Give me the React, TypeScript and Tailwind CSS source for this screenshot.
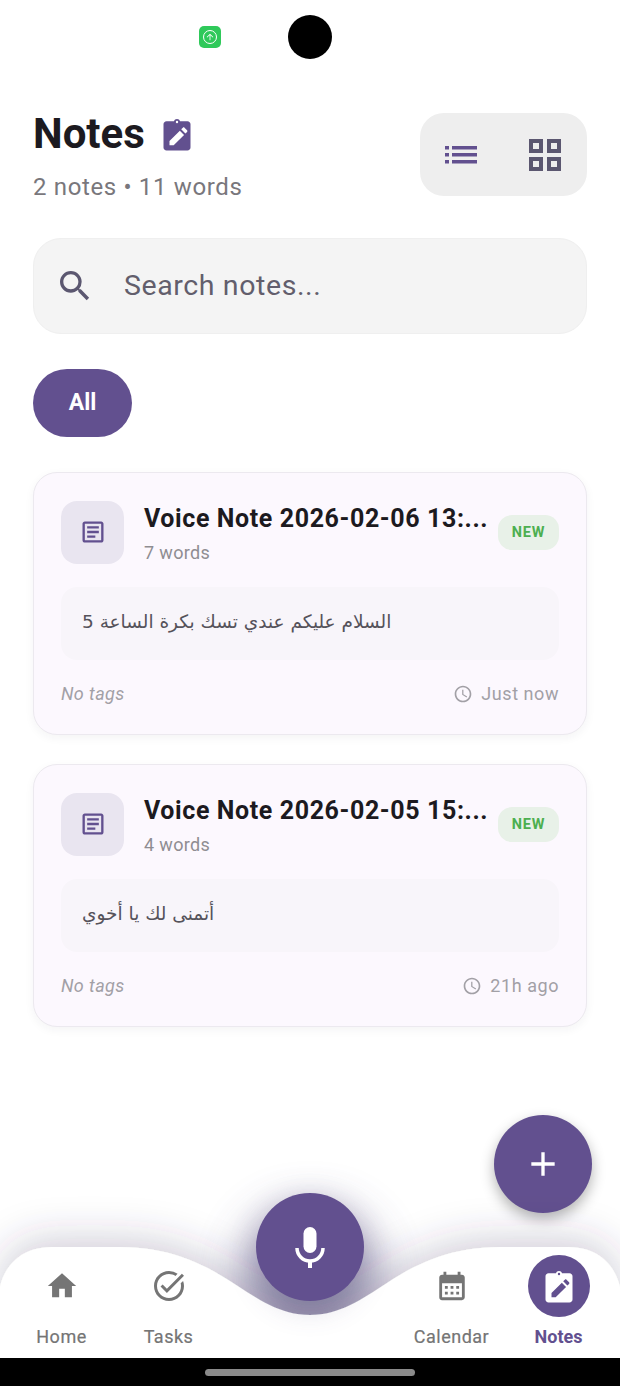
import { MdHome, MdTaskAlt, MdCalendarMonth, MdSearch, MdOutlineArticle, MdAccessTime, MdAdd, MdArrowUpward } from 'react-icons/md';

const notes = [
  { title: 'Voice Note 2026-02-06 13:...', words: '7 words', body: 'السلام عليكم عندي تسك بكرة الساعة 5', time: 'Just now' },
  { title: 'Voice Note 2026-02-05 15:...', words: '4 words', body: 'أتمنى لك يا أخوي', time: '21h ago' },
];

function ClipboardEdit({ className, bg, fg }: { className: string; bg: string; fg: string }) {
  return (
    <svg viewBox="0 0 24 24" className={className}>
      <path fill={bg} d="M5 3.500h5c.3-1 1-1.500 2-1.500s1.700.5 2 1.500h5c1.100 0 2 .9 2 2V21c0 1.100-.9 2-2 2H5c-1.100 0-2-.9-2-2V5.500c0-1.100.9-2 2-2z" />
      <circle cx="12" cy="4" r="0.800" fill={fg} />
      <path fill={fg} d="M7 19.500v-2.800l6.900-6.900 2.800 2.800-6.900 6.900H7zM14.800 8.900l1.100-1.100c.3-.3.800-.3 1.100 0l1.700 1.700c.3.3.3.800 0 1.100l-1.100 1.100-2.800-2.800z" />
    </svg>
  );
}

function NoteCard({ note }: { note: (typeof notes)[number] }) {
  return (
    <div className="h-[263px] rounded-[24px] border border-[#ece9ef] bg-[#fcf8fe] px-[27px] pt-[27px] shadow-[0_3px_10px_rgba(40,30,60,0.05)]">
      <div className="flex h-[64px] items-center">
        <div className="flex h-[63px] w-[63px] shrink-0 items-center justify-center rounded-[16px] bg-[#e9e5f0]">
          <MdOutlineArticle className="h-[28px] w-[28px] text-[#62508f]" />
        </div>
        <div className="ml-[20px] w-[350px] min-w-0 pt-[3px]">
          <div className="whitespace-nowrap text-[25px] font-bold leading-[32px] tracking-[0.6px] text-[#1c1a20]">{note.title}</div>
          <div className="mt-[6px] text-[18px] leading-[24px] tracking-[0.35px] text-[#8f8d92]">{note.words}</div>
        </div>
        <div className="ml-auto flex h-[35px] w-[61px] shrink-0 items-center justify-center rounded-[14px] bg-[#e8f1e8] pt-[2px] text-[14.500px] font-bold tracking-[0.8px] text-[#4caf50]">NEW</div>
      </div>
      <div className="mt-[23px] flex h-[73px] items-center rounded-[16px] bg-[#f8f5fa] px-[21px] pb-[3px]">
        <span dir="rtl" className="text-[18.500px] text-[#55525a] [font-family:'DejaVu_Sans',sans-serif]">{note.body}</span>
      </div>
      <div className="mt-[20px] flex items-center justify-between">
        <span className="text-[18px] italic tracking-[0.4px] text-[#a2a0a6]">No tags</span>
        <span className="flex items-center gap-[8px] text-[18px] tracking-[0.55px] text-[#a2a0a6]">
          <MdAccessTime className="h-[20px] w-[20px]" />
          {note.time}
        </span>
      </div>
    </div>
  );
}

function NavItem({ label, children, active }: { label: string; children: React.ReactNode; active?: boolean }) {
  return (
    <div className="flex w-[107px] flex-col items-center">
      <div className="flex h-[62px] w-[62px] items-center justify-center">{children}</div>
      <span className={active ? 'mt-[8px] text-[18px] font-bold leading-[24px] text-[#62508f]' : 'mt-[8px] text-[18px] font-normal leading-[24px] tracking-[0.5px] text-[#757575] [-webkit-text-stroke:0.2px_#757575]'}>{label}</span>
    </div>
  );
}

export default function App() {
  return (
    <div className="relative flex h-[1386px] w-[620px] flex-col overflow-hidden bg-white [font-family:Roboto,sans-serif]">
      {/* status bar with camera hole */}
      <div className="relative h-[113px] shrink-0">
        <div className="absolute left-[199px] top-[26px] flex h-[22px] w-[22px] items-center justify-center rounded-[5px] bg-[#2fc95a]">
          <div className="flex h-[14px] w-[14px] items-center justify-center rounded-full border border-white">
            <MdArrowUpward className="h-[10px] w-[10px] text-white" />
          </div>
        </div>
        <div className="absolute left-[288px] top-[15px] h-[44px] w-[44px] rounded-full bg-black" />
      </div>

      <div className="flex-1 px-[33px]">
        <div className="flex h-[83px] items-start justify-between">
          <div>
            <div className="flex h-[42px] items-center">
              <span className="text-[42px] font-bold leading-[42px] text-[#1c1a20]">Notes</span>
              <ClipboardEdit className="ml-[14px] h-[36px] w-[36px]" bg="#62508f" fg="#ffffff" />
            </div>
            <div className="mt-[18px] text-[24px] leading-[28px] tracking-[0.65px] text-[#79777c]">2 notes • 11 words</div>
          </div>
          <div className="flex h-[83px] w-[167px] items-center rounded-[24px] bg-[#eeeeee] pl-[25px]">
            <svg viewBox="0 0 32 18" className="h-[18px] w-[32px] text-[#62508f]" fill="currentColor">
              <rect x="0" y="0" width="4" height="3.500" />
              <rect x="7" y="0" width="25" height="3.500" />
              <rect x="0" y="7" width="4" height="3.500" />
              <rect x="7" y="7" width="25" height="3.500" />
              <rect x="0" y="14" width="4" height="3.500" />
              <rect x="7" y="14" width="25" height="3.500" />
            </svg>
            <svg viewBox="0 0 32 32" className="ml-[52px] h-[32px] w-[32px] text-[#5b5770]" fill="none" stroke="currentColor" strokeWidth="4">
              <rect x="2" y="2" width="10" height="10" />
              <rect x="20" y="2" width="10" height="10" />
              <rect x="2" y="20" width="10" height="10" />
              <rect x="20" y="20" width="10" height="10" />
            </svg>
          </div>
        </div>

        <div className="mt-[42px] flex h-[96px] items-center rounded-[28px] border border-[#efefef] bg-[#f4f4f4] pl-[21px]">
          <MdSearch className="h-[40px] w-[40px] text-[#5b5770]" />
          <span className="ml-[29px] text-[28.500px] tracking-[0.6px] text-[#625e6c]">Search notes...</span>
        </div>

        <div className="mt-[35px] flex h-[68px] w-[99px] items-center justify-center rounded-[34px] bg-[#62508f] pt-px text-[23px] font-bold text-white">All</div>

        <div className="mt-[35px] flex flex-col gap-[29px]">
          {notes.map((n) => (
            <NoteCard key={n.title} note={n} />
          ))}
        </div>
      </div>

      {/* floating add button */}
      <div className="absolute left-[494px] top-[1115px] flex h-[98px] w-[98px] items-center justify-center rounded-full bg-[#62508f] shadow-[0_6px_14px_rgba(0,0,0,0.3)]">
        <MdAdd className="h-[40px] w-[40px] text-white" />
      </div>

      {/* bottom nav with centre notch */}
      <div className="absolute bottom-[28px] left-0 h-[111px] w-[620px]">
        <svg viewBox="0 0 620 111" className="absolute inset-0 h-[111px] w-[620px] overflow-visible">
          <defs>
            <filter id="navShadow" x="-20%" y="-80%" width="140%" height="200%">
              <feDropShadow dx="0" dy="-8" stdDeviation="20" floodColor="#3a3060" floodOpacity="0.24" />
            </filter>
            <filter id="glow" x="-100%" y="-100%" width="300%" height="300%">
              <feGaussianBlur stdDeviation="24" />
            </filter>
          </defs>
          <circle cx="310" cy="30" r="66" fill="#4f4678" opacity="0.6" filter="url(#glow)" />
          <path filter="url(#navShadow)" fill="#ffffff" d="M0 40C6 14 26 0 52 0H120C165 0 200 14 233 36C258 52 280 68 310 68C340 68 362 52 387 36C420 14 455 0 500 0H568C594 0 614 14 620 40V111H0Z" />
        </svg>
        <div className="relative flex items-start justify-between px-[8px] pt-[8px]">
          <div className="flex">
            <NavItem label="Home"><MdHome className="h-[34px] w-[34px] text-[#757575]" /></NavItem>
            <NavItem label="Tasks"><MdTaskAlt className="h-[36px] w-[36px] text-[#757575]" /></NavItem>
          </div>
          <div className="flex">
            <NavItem label="Calendar"><MdCalendarMonth className="h-[34px] w-[34px] text-[#757575]" /></NavItem>
            <NavItem label="Notes" active>
              <div className="flex h-[62px] w-[62px] items-center justify-center rounded-full bg-[#62508f]">
                <ClipboardEdit className="h-[36px] w-[36px]" bg="#ffffff" fg="#62508f" />
              </div>
            </NavItem>
          </div>
        </div>
      </div>

      {/* mic button */}
      <div className="absolute left-[256px] top-[1193px] flex h-[108px] w-[108px] items-center justify-center rounded-full bg-[#62508f] shadow-[0_8px_30px_rgba(79,70,120,0.2)]">
        <svg viewBox="0 0 30 41" className="h-[41px] w-[30px]" fill="#ffffff">
          <rect x="8.500" y="0" width="13" height="26" rx="6.500" />
          <path d="M2 21a13 13 0 0 0 26 0" fill="none" stroke="#ffffff" strokeWidth="3.500" />
          <rect x="13" y="33" width="4" height="8" />
        </svg>
      </div>

      {/* android gesture bar */}
      <div className="absolute bottom-0 left-0 flex h-[28px] w-[620px] items-center justify-center bg-black">
        <div className="h-[7px] w-[210px] rounded-full bg-[#8a8a8a]" />
      </div>
    </div>
  );
}
